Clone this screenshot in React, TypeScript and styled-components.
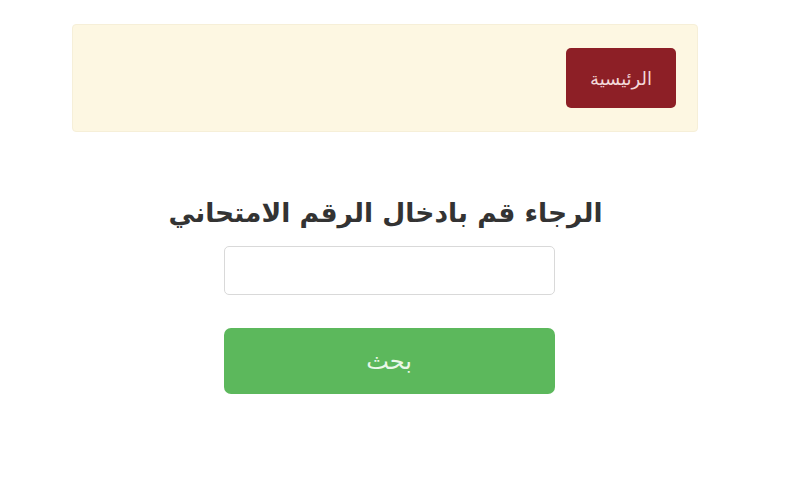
import React from 'react';
import styled, { createGlobalStyle } from 'styled-components';

const GlobalStyle = createGlobalStyle`
    html, body {
        margin: 0;
        padding: 0;
        background: #fff;
        font-family: "DejaVu Sans", "Noto Sans", sans-serif;
        color: #333;
    }
`

const Page = styled.div`
    width: 626px;
    margin-left: 72px;
    padding-top: 24px;
    direction: rtl;
`

const NavBar = styled.div`
    display: flex;
    align-items: center;
    height: 108px;
    padding: 0 21px;
    box-sizing: border-box;
    background-color: #fdf7e2;
    border: 1px solid #f6efd8;
    border-radius: 4px;
`

const HomeButton = styled.button`
    width: 110px;
    height: 60px;
    border: none;
    border-radius: 5px;
    background-color: #8d1f26;
    color: #f3d9da;
    font-family: inherit;
    font-size: 18px;
`

const SearchForm = styled.form`
    display: flex;
    flex-direction: column;
    align-items: center;
    margin-top: 61px;
    padding-left: 8px;
    h1 {
        margin: 0 7px 0 0;
        font-size: 26.5px;
        font-weight: bold;
        line-height: 40px;
        color: #333;
    }
`

const ExamInput = styled.input`
    width: 331px;
    height: 49px;
    box-sizing: border-box;
    margin-top: 13px;
    border: 1px solid #d9d9d9;
    border-radius: 5px;
    background: #fff;
`

const SearchButton = styled.button`
    width: 331px;
    height: 66px;
    margin-top: 33px;
    border: none;
    border-radius: 7px;
    background-color: #5cb85c;
    color: #eaf7e9;
    font-family: inherit;
    font-size: 24px;
`

const App = () => {
    return (
        <>
            <GlobalStyle />
            <Page>
                <NavBar>
                    <HomeButton type='button'>الرئيسية</HomeButton>
                </NavBar>
                <SearchForm onSubmit={(e) => e.preventDefault()}>
                    <h1>الرجاء قم بادخال الرقم الامتحاني</h1>
                    <ExamInput type='text' />
                    <SearchButton type='submit'>بحث</SearchButton>
                </SearchForm>
            </Page>
        </>
    )
}

export default App
